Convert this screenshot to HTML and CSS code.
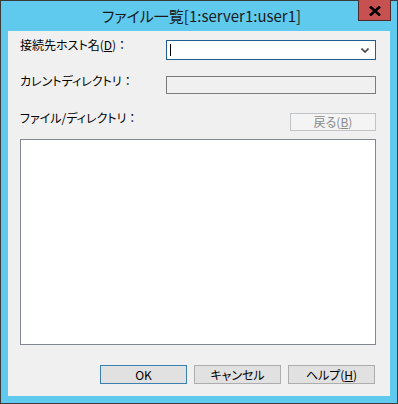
FILE: index.html
```html
<!DOCTYPE html>
<html lang="ja">
<head>
    <meta charset="UTF-8">
    <title>ファイル一覧</title>
    <link rel="stylesheet" href="styles.css">
</head>
<body>
    <div class="window">
        <div class="titlebar">
            <span></span>
            <span class="title">ファイル一覧[1:server1:user1]</span>
            <button class="close-btn">
                <svg width="12" height="10" viewBox="0 0 12 10">
                    <path d="M1 0.5 L11 9.5 M11 0.5 L1 9.5" stroke="#000" stroke-width="2.6"/>
                </svg>
            </button>
        </div>

        <div class="content">
            <div class="row row-host">
                <span class="label">接続先ホスト名(<u>D</u>)<span class="colon">：</span></span>
                <div class="combo">
                    <span class="caret"></span>
                    <svg class="arrow" width="8" height="5" viewBox="0 0 8 5">
                        <path d="M0.5 0.5 L4 4 L7.5 0.5" fill="none" stroke="#444" stroke-width="1.6"/>
                    </svg>
                </div>
            </div>

            <div class="row row-dir">
                <span class="label">カレントディレクトリ<span class="colon">：</span></span>
                <div class="field"></div>
            </div>

            <div class="row row-files">
                <span class="label">ファイル/ディレクトリ<span class="colon">：</span></span>
                <button class="btn btn-back" disabled>戻る(<u>B</u>)</button>
            </div>

            <div class="listbox"></div>

            <div class="footer">
                <button class="btn btn-default">OK</button>
                <button class="btn">キャンセル</button>
                <button class="btn">ヘルプ(<u>H</u>)</button>
            </div>
        </div>
    </div>
</body>
</html>
```

FILE: styles.css
```css
* {
    margin: 0;
    padding: 0;
    box-sizing: border-box;
    font-family: "Noto Sans CJK JP", "Noto Sans", sans-serif;
    font-feature-settings: "palt";
}

body {
    background-color: #fff;
}

.window {
    width: 398px;
    height: 404px;
    border: 1px solid #3b3b3b;
    background-color: #5fc9ee;
    padding: 0 7px 7px 7px;
    display: flex;
    flex-direction: column;
}

.titlebar {
    height: 30px;
    display: grid;
    grid-template-columns: 1fr auto 1fr;
    align-items: start;
    margin-right: -1px;
}

.title {
    font-size: 15px;
    line-height: 30px;
    color: #1a1a1a;
    padding-left: 4px;
}

.close-btn {
    justify-self: end;
    width: 33px;
    height: 21px;
    margin-top: -1px;
    background-color: #c75050;
    border: 1px solid #4b2b2b;
    border-top: none;
    display: flex;
    align-items: center;
    justify-content: center;
    padding-top: 1px;
}

.content {
    flex: 1;
    background-color: #f0f0f0;
    padding: 9px 14px 0 12px;
    display: flex;
    flex-direction: column;
}

.row {
    display: flex;
    align-items: flex-start;
}

.label {
    width: 146px;
    font-size: 12px;
    line-height: 14px;
    margin-top: -2px;
    color: #000;
}

.colon {
    font-feature-settings: normal;
}

.label u, .btn u {
    text-decoration-thickness: 1px;
    text-underline-offset: 1px;
}

.combo {
    flex: 1;
    height: 20px;
    border: 1px solid #225d8f;
    background-color: #fff;
    display: flex;
    align-items: center;
    justify-content: space-between;
    padding: 0 6px 0 3px;
}

.caret {
    width: 1px;
    height: 12px;
    background-color: #000;
}

.arrow {
    margin-top: 1px;
}

.row-dir {
    margin-top: 16px;
}

.field {
    flex: 1;
    height: 18px;
    border: 1px solid #7a7a7a;
    background-color: #f0f0f0;
}

.row-files {
    margin-top: 19px;
    justify-content: space-between;
}

.btn {
    width: 87px;
    height: 19px;
    border: 1px solid #adadad;
    background-color: #e1e1e1;
    font-size: 12px;
    line-height: 16px;
    color: #000;
}

.btn-back {
    width: 86px;
    height: 18px;
    border-color: #c0c4c6;
    background-color: #f4f4f4;
    color: #8a8a8a;
}

.btn-default {
    border-color: #3c7fb1;
}

.listbox {
    height: 206px;
    margin-top: 8px;
    border: 1px solid #828790;
    background-color: #fff;
}

.footer {
    margin-top: 20px;
    display: flex;
    justify-content: flex-end;
    gap: 7px;
    padding-right: 1px;
}
```
